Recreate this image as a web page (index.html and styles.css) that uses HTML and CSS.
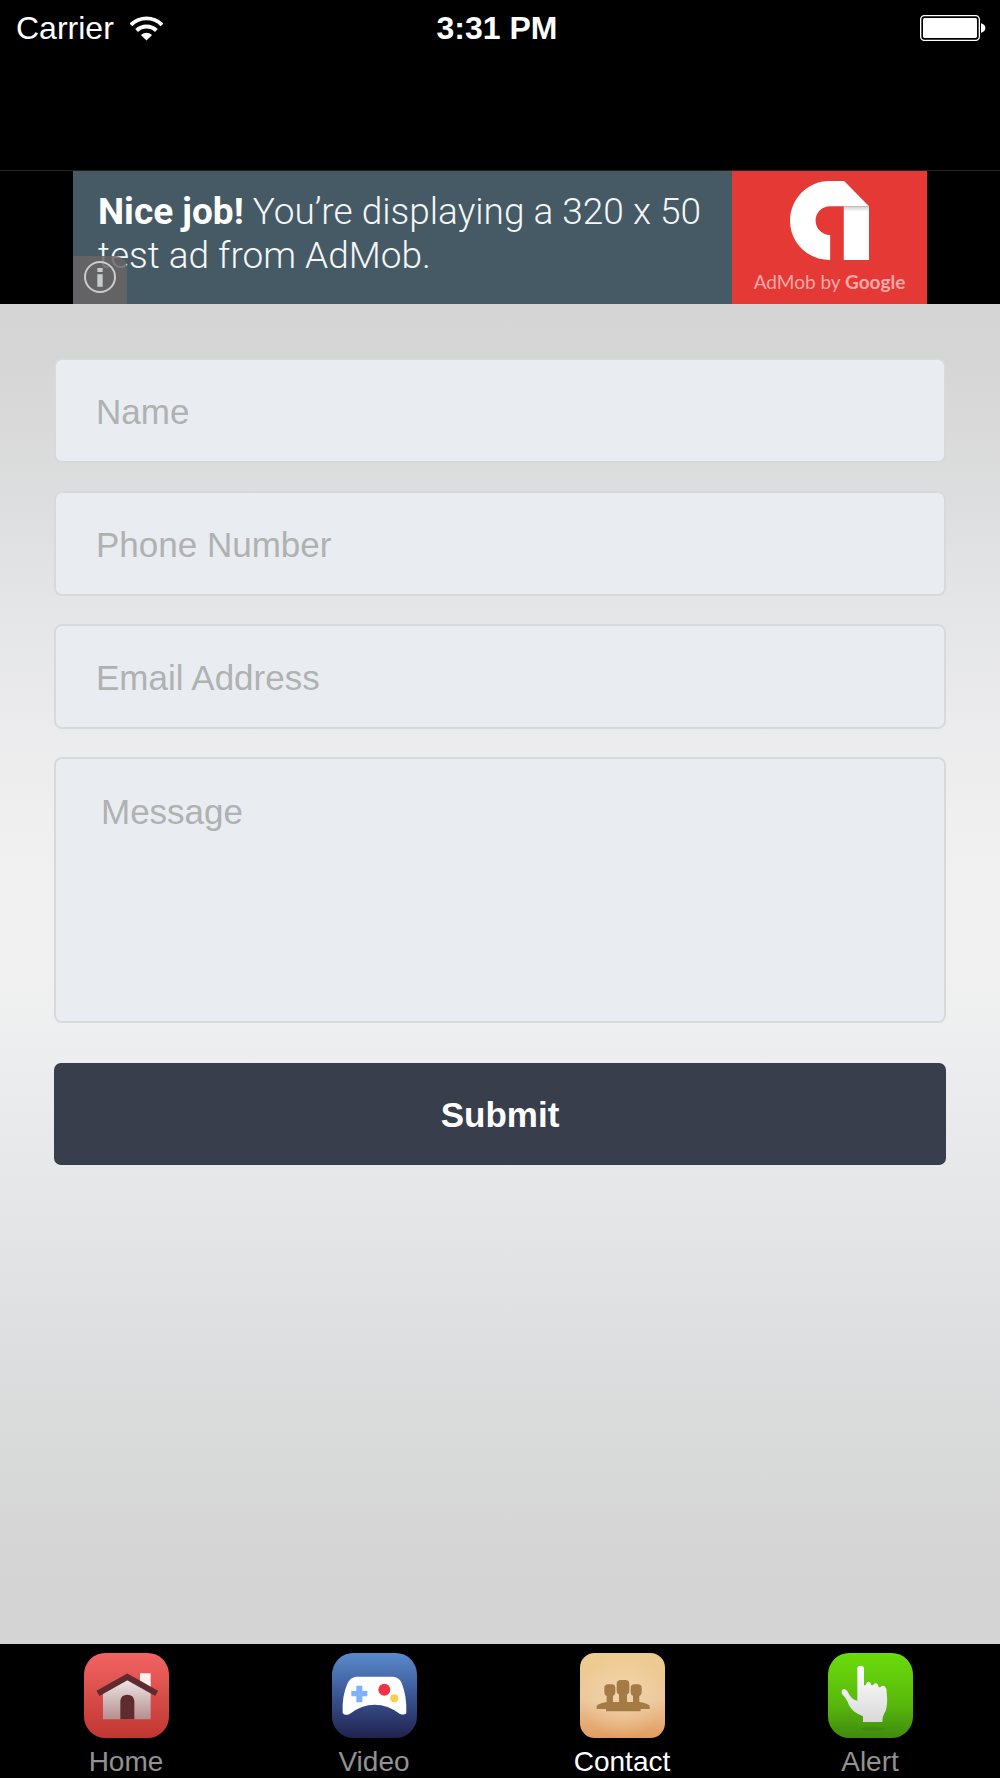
FILE: index.html
```html
<!DOCTYPE html>
<html lang="en">
<head>
<meta charset="utf-8">
<meta name="viewport" content="width=device-width, initial-scale=1">
<title>Contact</title>
<link rel="stylesheet" href="styles.css">
</head>
<body>
<header class="topbar">
  <div class="status">
    <div class="carrier">
      <span>Carrier</span>
      <svg class="wifi" viewBox="392 43 100 74" aria-hidden="true">
        <g fill="none" stroke="#fff">
          <path stroke-width="12" d="M395 69A66 66 0 0 1 489 69"/>
          <path stroke-width="12" d="M412 86A43 43 0 0 1 472 86"/>
        </g>
        <path fill="#fff" d="M442 116L425 100Q442 86 459 100Z"/>
      </svg>
    </div>
    <time class="clock">3:31 PM</time>
    <svg class="battery" viewBox="0 0 198 78" aria-hidden="true">
      <rect x="2" y="2" width="176" height="74" rx="11" fill="none" stroke="#fff" stroke-width="4"/>
      <rect x="9" y="9" width="162" height="60" rx="5" fill="#fff"/>
      <path fill="#fff" d="M183 25Q196 28 196 39T183 53Z"/>
    </svg>
  </div>
</header>

<aside class="ad-strip">
  <div class="ad">
    <p class="ad-text"><b>Nice job!</b> You’re displaying a 320 x 50<br>test ad from AdMob.</p>
    <button class="ad-info" type="button" aria-label="About this ad">
      <svg viewBox="0 0 96 96" aria-hidden="true">
        <circle cx="48" cy="48" r="45" fill="none" stroke="currentColor" stroke-width="6"/>
        <path fill="currentColor" d="M40 21h16v12H40zM40 40h16v37H40z"/>
      </svg>
    </button>
    <div class="ad-brand">
      <svg class="admob" viewBox="868 540 238 238" aria-hidden="true">
        <defs>
          <linearGradient id="fold" x1="0" y1="0" x2="0" y2="1">
            <stop offset="0" stop-color="#ccc"/>
            <stop offset=".1" stop-color="#fff"/>
          </linearGradient>
        </defs>
        <path fill="#fff" d="M989 778C920 778 868 725 868 660S920 540 987 540H1031L1106 616H989C963 616 945 636 945 659S963 702 989 703Z"/>
        <path fill="url(#fold)" d="M1030 616h76v162h-76z"/>
      </svg>
      <span class="brand-name">AdMob by <b>Google</b></span>
    </div>
  </div>
</aside>

<main class="page">
  <form class="form">
    <input class="field" type="text" placeholder="Name" aria-label="Name">
    <input class="field" type="tel" placeholder="Phone Number" aria-label="Phone Number">
    <input class="field" type="email" placeholder="Email Address" aria-label="Email Address">
    <textarea class="field message" placeholder="Message" aria-label="Message"></textarea>
    <button class="submit" type="submit">Submit</button>
  </form>
</main>

<nav class="tabs">
  <a class="tab" href="#home">
    <svg class="tile" viewBox="0 0 255 255" aria-hidden="true">
      <defs>
        <linearGradient id="red" x1="0" y1="0" x2="0" y2="1"><stop offset="0" stop-color="#f26463"/><stop offset="1" stop-color="#c03630"/></linearGradient>
        <linearGradient id="wall" x1="0" y1="0" x2="0" y2="1"><stop offset="0" stop-color="#efe9e9"/><stop offset="1" stop-color="#b58e8e"/></linearGradient>
      </defs>
      <rect width="255" height="255" rx="64" fill="url(#red)"/>
      <path fill="#fff0f0" d="M168 61h32v42l-32-20z"/>
      <path fill="url(#wall)" d="M57 199V118L129 76L200 118V199Z"/>
      <path fill="#602b2e" d="M109 199V144Q111 125 130 125Q149 125 151 144V199Z"/>
      <path fill="none" stroke="#602b2e" stroke-width="18" d="M42 121L130 72L218 121"/>
    </svg>
    <span>Home</span>
  </a>
  <a class="tab" href="#video">
    <svg class="tile" viewBox="0 0 255 255" aria-hidden="true">
      <defs>
        <linearGradient id="blue" x1="0" y1="0" x2="0" y2="1"><stop offset="0" stop-color="#5b8bcd"/><stop offset=".5" stop-color="#3a5594"/><stop offset="1" stop-color="#20224e"/></linearGradient>
      </defs>
      <rect width="255" height="255" rx="64" fill="url(#blue)"/>
      <path fill="#fff" d="M72 71H184Q202 73 209 90Q225 130 223 181Q216 188 203 182Q167 155 128 155T54 182Q39 190 32 180Q29 130 47 90Q55 74 72 71Z"/>
      <path fill="#7db1fb" d="M73 98h18v16h15v16H91v18H73v-18H58v-16h15z"/>
      <circle cx="157" cy="110" r="18" fill="#f43245"/>
      <circle cx="187" cy="136" r="12" fill="#f9cd4e"/>
    </svg>
    <span>Video</span>
  </a>
  <a class="tab is-active" href="#contact" aria-current="page">
    <svg class="tile" viewBox="0 0 255 255" aria-hidden="true">
      <defs>
        <linearGradient id="sand" x1="0" y1="0" x2="0" y2="1"><stop offset="0" stop-color="#eecb8e"/><stop offset=".55" stop-color="#ecc79a"/><stop offset="1" stop-color="#e09c60"/></linearGradient>
        <radialGradient id="glow"><stop offset="0" stop-color="#f3d8b4" stop-opacity=".8"/><stop offset="1" stop-color="#f3d8b4" stop-opacity="0"/></radialGradient>
      </defs>
      <rect width="255" height="255" rx="44" fill="url(#sand)"/>
      <rect width="255" height="255" rx="44" fill="url(#glow)"/>
      <g fill="#a57b45">
        <rect x="73" y="94" width="33" height="35" rx="11"/>
        <rect x="152" y="94" width="33" height="35" rx="11"/>
        <rect x="110" y="81" width="38" height="44" rx="12"/>
        <path d="M80 122h19v28h-19zM159 122h19v28h-19zM117 118h24v32h-24z"/>
        <path d="M50 168V158Q58 150 82 147H177Q201 150 209 158V168H182V175H78V168Z"/>
      </g>
    </svg>
    <span>Contact</span>
  </a>
  <a class="tab" href="#alert">
    <svg class="tile" viewBox="0 0 255 255" aria-hidden="true">
      <defs>
        <linearGradient id="green" x1="0" y1="0" x2="0" y2="1"><stop offset="0" stop-color="#6cdc0b"/><stop offset=".6" stop-color="#58b80c"/><stop offset="1" stop-color="#408a0e"/></linearGradient>
        <linearGradient id="hand" x1="0" y1="0" x2="0" y2="1"><stop offset="0" stop-color="#fff"/><stop offset="1" stop-color="#d9d9d9"/></linearGradient>
      </defs>
      <rect width="255" height="255" rx="64" fill="url(#green)"/>
      <ellipse cx="134" cy="227" rx="36" ry="6" fill="#418812" opacity=".7"/>
      <path fill="url(#hand)" d="M88 44Q90 38 98 38T108 44V97H113Q116 85 122 86Q128 87 130 97H135Q139 89 145 91Q151 93 152 103H157Q163 96 170 100Q176 105 176 118Q180 152 173 174Q163 188 163 207H105V190Q74 178 63 157Q58 139 42 123Q38 111 47 108Q55 107 59 116Q69 139 88 143Z"/>
    </svg>
    <span>Alert</span>
  </a>
</nav>
</body>
</html>
```
FILE: styles.css
```css
* {
  box-sizing: border-box;
}

body {
  margin: 0;
  min-height: 100vh;
  display: flex;
  flex-direction: column;
  background: #000;
  color: #fff;
  font-family: "Liberation Sans", Arial, sans-serif;
}

/* Status bar */
.topbar {
  height: 171px;
  border-bottom: 1px solid #222;
}

.status {
  display: grid;
  grid-template-columns: 1fr auto 1fr;
  align-items: center;
  height: 56px;
  padding: 0 14px 0 16px;
  font-size: 32px;
}

.carrier {
  display: flex;
  align-items: center;
  gap: 16px;
}

.wifi {
  width: 33px;
  height: 25px;
}

.clock {
  padding-right: 8px;
  font-weight: 700;
}

.battery {
  width: 66px;
  height: 26px;
  justify-self: end;
}

/* Banner ad */
.ad-strip {
  display: flex;
  justify-content: center;
}

.ad {
  position: relative;
  display: flex;
  justify-content: space-between;
  width: 854px;
  height: 133px;
  background: #465a65;
  font-family: Roboto, sans-serif;
}

.ad-text {
  margin: 0;
  padding: 19px 0 0 25px;
  color: #f4f6f7;
  font-size: 37px;
  font-weight: 300;
  line-height: 44px;
  white-space: nowrap;
}

.ad-text b {
  color: #fff;
  font-weight: 700;
}

.ad-info {
  position: absolute;
  left: 0;
  bottom: 0;
  display: flex;
  align-items: flex-start;
  justify-content: center;
  width: 54px;
  height: 48px;
  padding: 5px 0 0;
  border: 0;
  border-radius: 0 12px 0 0;
  background: rgba(104, 100, 100, 0.85);
  color: #c9cccd;
}

.ad-info svg {
  width: 32px;
  height: 32px;
}

.ad-brand {
  display: flex;
  flex-direction: column;
  align-items: center;
  gap: 10px;
  width: 195px;
  padding-top: 10px;
  background: #e53935;
}

.admob {
  width: 79px;
  height: 79px;
}

.brand-name {
  color: #f7aaa7;
  font-family: Lato, sans-serif;
  font-size: 19px;
  line-height: 24px;
  white-space: nowrap;
}

/* Contact form */
.page {
  flex: 1;
  padding: 54px 54px 64px;
  background: linear-gradient(
    #d5d5d5 0%,
    #d6d6d6 5%,
    #dadbda 11%,
    #dddee0 15%,
    #e4e5e7 22%,
    #ebebed 31%,
    #efefef 38%,
    #f0f1f0 43%,
    #f0f1f0 50%,
    #edeeef 55%,
    #e9eaec 61%,
    #e3e5e6 69%,
    #dddfe0 77%,
    #d9dada 85%,
    #d5d5d5 93%,
    #d4d4d4 100%
  );
}

.form {
  display: flex;
  flex-direction: column;
}

.field {
  width: 100%;
  height: 105px;
  margin: 0 0 28px;
  padding: 2px 40px 0;
  border: 2px solid #d8d9d9;
  border-radius: 8px;
  background: #e9edf2;
  color: #333;
  font: 35px/40px "Liberation Sans", Arial, sans-serif;
}

.field::placeholder {
  color: #b0b1b1;
  opacity: 1;
}

.message {
  height: 266px;
  margin-bottom: 40px;
  padding: 33px 45px;
  resize: none;
}

.submit {
  height: 102px;
  padding: 2px 0 0;
  border: 0;
  border-radius: 7px;
  background: #383e4c;
  color: #fff;
  font: 700 35px/40px "Liberation Sans", Arial, sans-serif;
}

/* Tab bar */
.tabs {
  display: grid;
  grid-template-columns: repeat(4, 1fr);
  height: 134px;
  padding: 9px 6px 0 2px;
  background: #000;
}

.tab {
  display: flex;
  flex-direction: column;
  align-items: center;
  gap: 8px;
  color: #929292;
  font-size: 28px;
  line-height: 32px;
  text-decoration: none;
}

.tab.is-active {
  color: #fff;
}

.tile {
  width: 85px;
  height: 85px;
}
```
